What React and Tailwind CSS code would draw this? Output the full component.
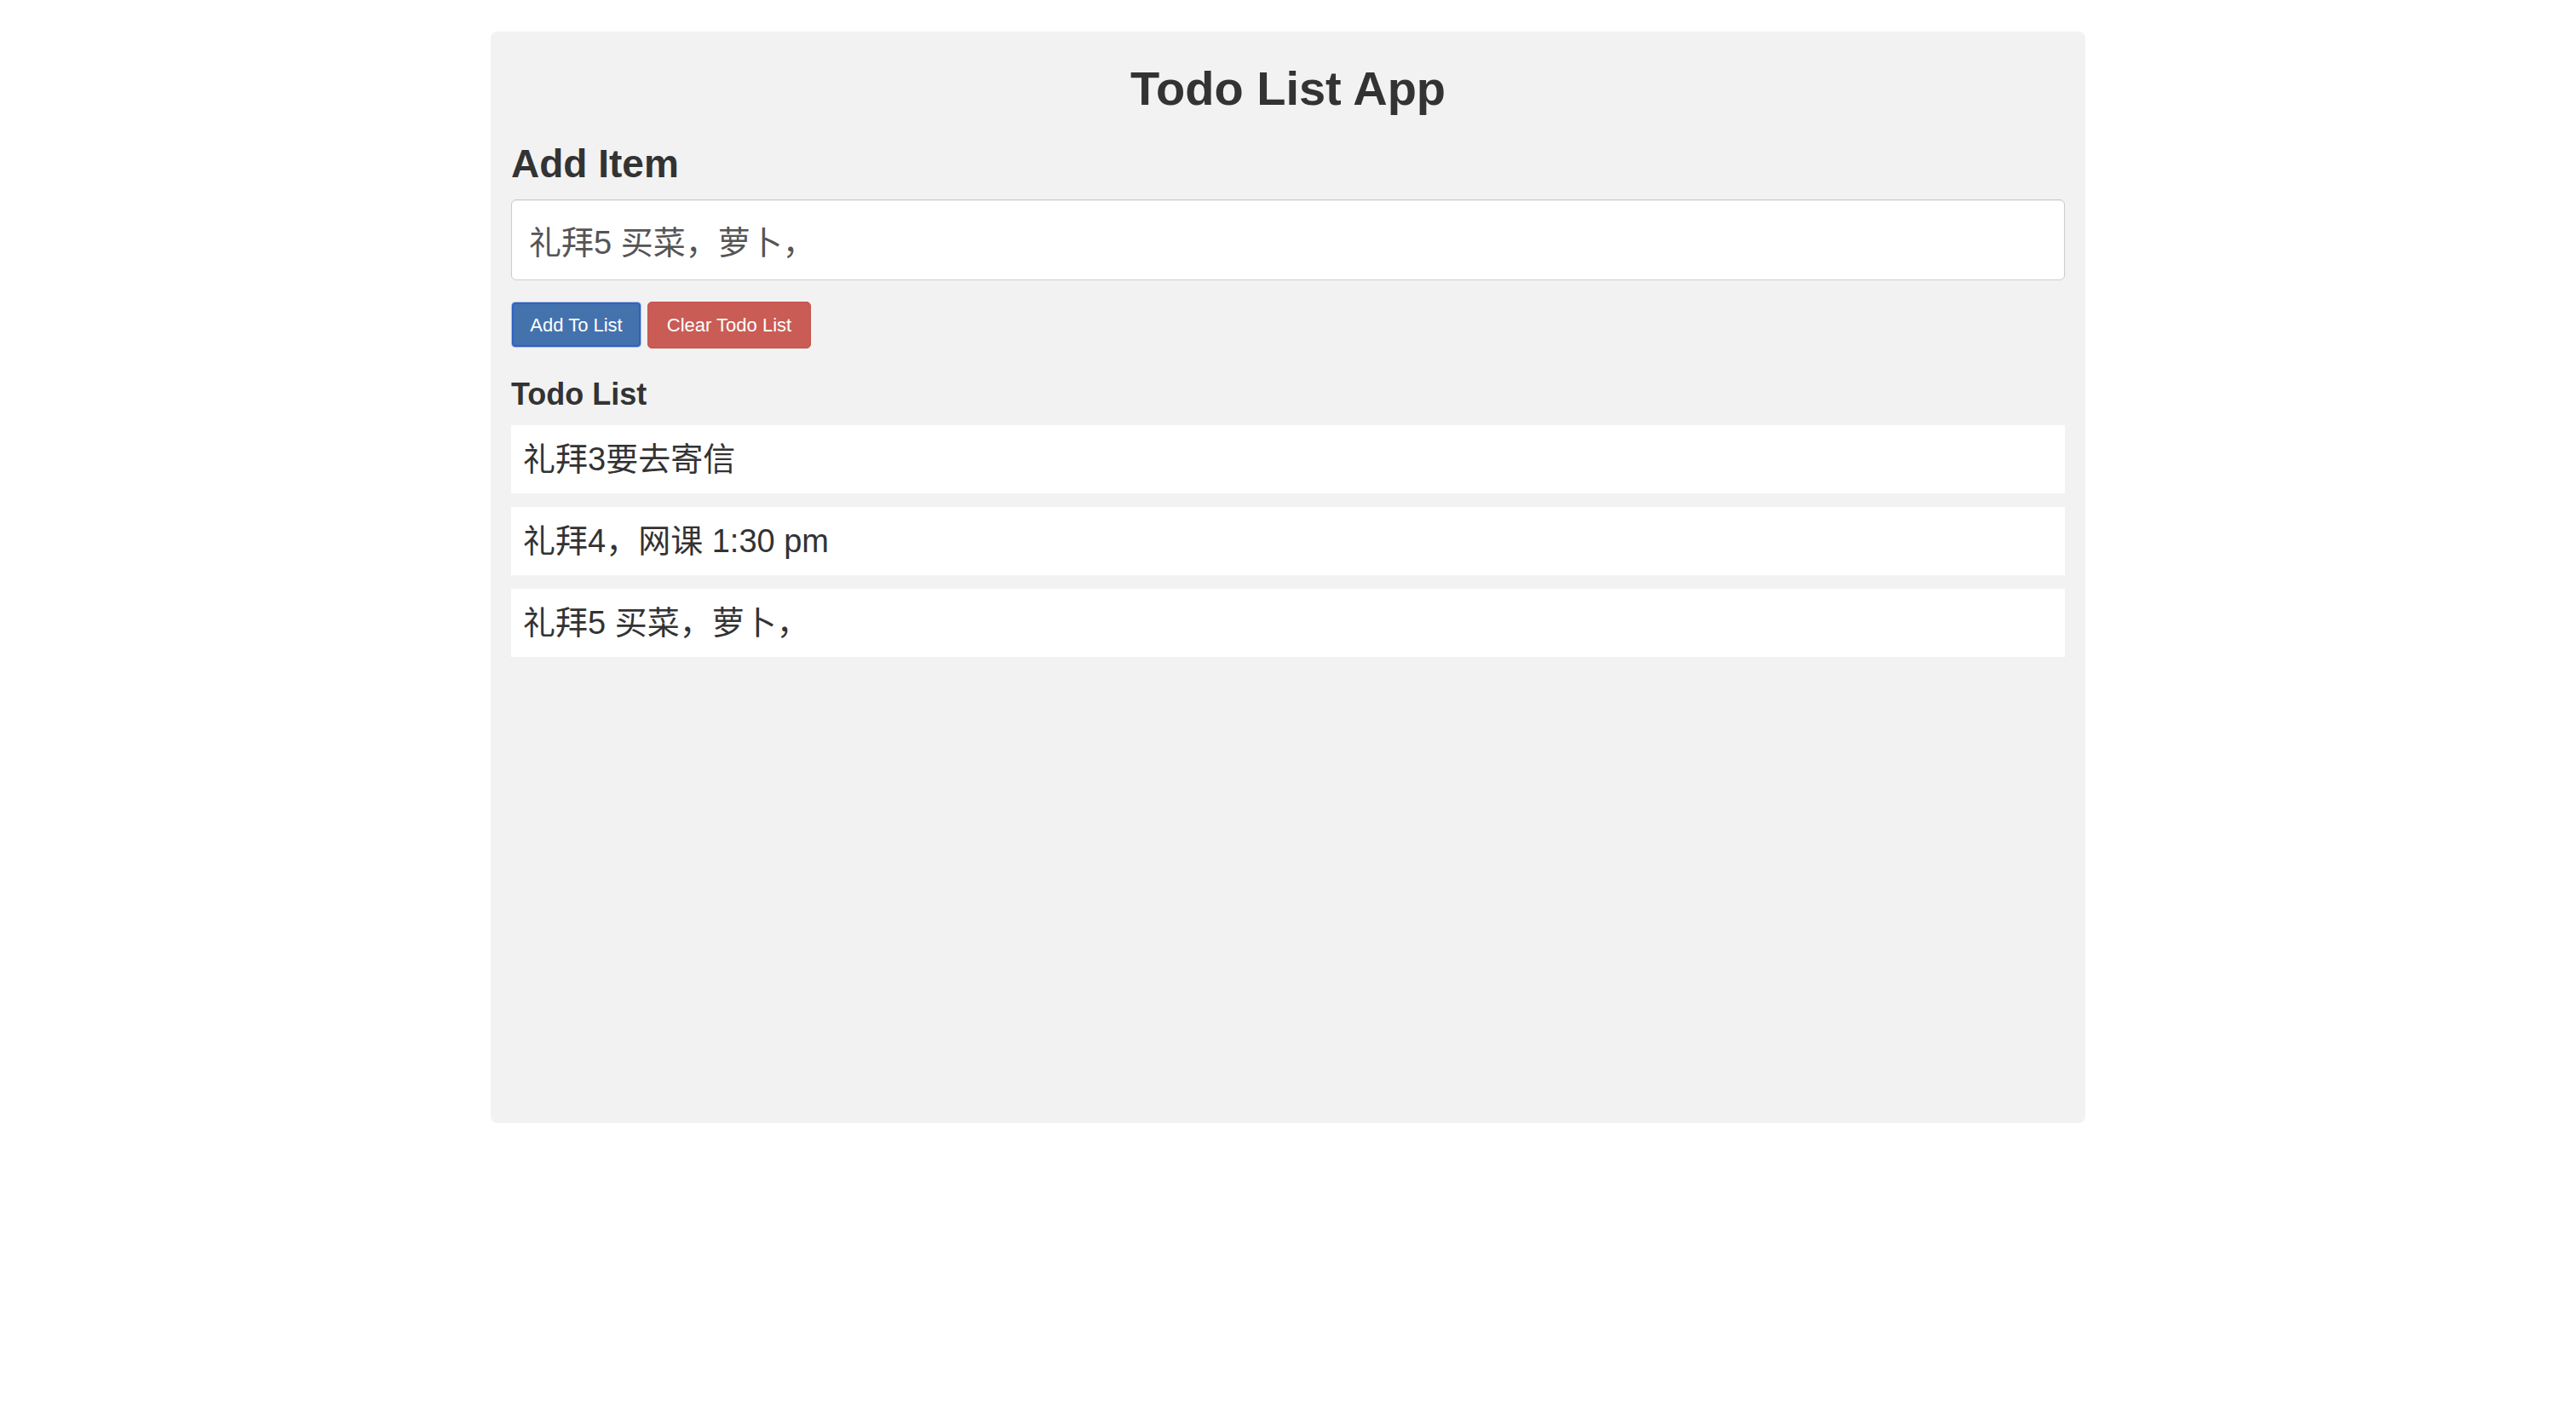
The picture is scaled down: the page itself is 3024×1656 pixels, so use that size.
import { useState } from 'react';

const font = { fontFamily: '"Liberation Sans", "Noto Sans CJK SC", Arial, sans-serif' };

const App = () => {
  const [text, setText] = useState('礼拜5 买菜，萝卜，');
  const [items, setItems] = useState(['礼拜3要去寄信', '礼拜4，网课 1:30 pm', '礼拜5 买菜，萝卜，']);

  const addItem = () => {
    if (!text.trim()) return;
    setItems([...items, text]);
  };

  return (
    <div className="min-h-screen bg-white pt-[37px]" style={font}>
      <div className="mx-auto w-[1872px] h-[1281px] bg-[#f2f2f2] rounded-[8px] px-[24px] pt-[36px] text-[#333]">
        <h1 className="text-center text-[56px] leading-[62px] font-bold">Todo List App</h1>

        {/* Add item section */}
        <h2 className="mt-[32px] text-[46px] leading-[51px] font-bold">Add Item</h2>
        <input
          value={text}
          onChange={(e) => setText(e.target.value)}
          className="mt-[16px] block w-full h-[95px] bg-white border border-[#ccc] rounded-[6px] px-[20px] text-[38px] text-[#555] shadow-[inset_0_1px_1px_rgba(0,0,0,0.075)] outline-none"
        />
        <div className="mt-[25px] flex items-center gap-[8px] h-[54px]">
          <button
            onClick={addItem}
            className="ml-[1px] w-[151px] h-[52px] bg-[#4472ad] border-2 border-[#2f62c4] rounded-[4px] text-white text-[22px] shadow-[0_0_0_1px_#a9bfe3]"
          >
            Add To List
          </button>
          <button
            onClick={() => setItems([])}
            className="w-[192px] h-[55px] bg-[#c95c55] border border-[#c4544d] rounded-[5px] text-white text-[22px]"
          >
            Clear Todo List
          </button>
        </div>

        {/* Todo list */}
        <h3 className="mt-[35px] text-[36px] leading-[40px] font-bold">Todo List</h3>
        <div className="mt-[16px] flex flex-col gap-[16px]">
          {items.map((item, i) => (
            <div key={i} className="h-[80px] bg-white flex items-center px-[14px] text-[38px] text-[#333]">
              {item}
            </div>
          ))}
        </div>
      </div>
    </div>
  );
};

export default App;
